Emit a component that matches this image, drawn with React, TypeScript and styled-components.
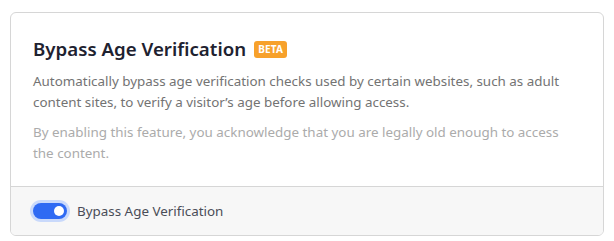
import React, { useState } from 'react'
import styled, { createGlobalStyle } from 'styled-components'

const GlobalStyle = createGlobalStyle`
  body {
    margin: 0;
    background: #ffffff;
    font-family: "Noto Sans", "Open Sans", sans-serif;
  }
`

const Page = styled.div`
  padding: 12px 10px 6px;
`

const Card = styled.section`
  border: 1px solid #d6d6d6;
  border-radius: 6px;
  overflow: hidden;
  background: #ffffff;
`

const Body = styled.div`
  padding: 22px 22px 22px;
`

const TitleRow = styled.div`
  display: flex;
  align-items: center;
  gap: 8px;
`

const Title = styled.h2`
  margin: 0;
  font-size: 18.7px;
  font-weight: 600;
  line-height: 28px;
  color: #1e2230;
`

const Badge = styled.span`
  display: inline-flex;
  align-items: center;
  height: 17px;
  padding: 0 4px;
  border-radius: 3px;
  background: #f7a12b;
  color: #ffffff;
  font-size: 10px;
  font-weight: 700;
  letter-spacing: 0.2px;
`

const Text = styled.p<{ $muted?: boolean }>`
  margin: ${(p) => (p.$muted ? '9px 0 0' : '8px 0 0')};
  font-size: 13.4px;
  line-height: 21px;
  color: ${(p) => (p.$muted ? '#ababab' : '#737373')};
`

const Footer = styled.div`
  display: flex;
  align-items: center;
  gap: 9px;
  padding: 0 22px;
  height: 48px;
  border-top: 1px solid #d6d6d6;
  background: #f7f7f7;
`

const Switch = styled.button<{ $on: boolean }>`
  position: relative;
  width: 34px;
  height: 16px;
  padding: 0;
  border: none;
  border-radius: 8px;
  background: ${(p) => (p.$on ? '#2f6af3' : '#c4c4c4')};
  box-shadow: 0 0 0 3px #c9d9fb;
  cursor: pointer;

  &::after {
    content: '';
    position: absolute;
    top: 3px;
    left: ${(p) => (p.$on ? '21px' : '3px')};
    width: 10px;
    height: 10px;
    border-radius: 50%;
    background: #ffffff;
  }
`

const Label = styled.span`
  font-size: 13.4px;
  color: #4a4d57;
  margin-left: 1px;
`

export default function App() {
  const [on, setOn] = useState(true)
  return (
    <>
      <GlobalStyle />
      <Page>
        <Card>
          <Body>
            <TitleRow>
              <Title>Bypass Age Verification</Title>
              <Badge>BETA</Badge>
            </TitleRow>
            <Text>
              Automatically bypass age verification checks used by certain websites, such as adult
              content sites, to verify a visitor’s age before allowing access.
            </Text>
            <Text $muted>
              By enabling this feature, you acknowledge that you are legally old enough to access
              the content.
            </Text>
          </Body>
          <Footer>
            <Switch $on={on} onClick={() => setOn(!on)} aria-label="Bypass Age Verification" />
            <Label>Bypass Age Verification</Label>
          </Footer>
        </Card>
      </Page>
    </>
  )
}
